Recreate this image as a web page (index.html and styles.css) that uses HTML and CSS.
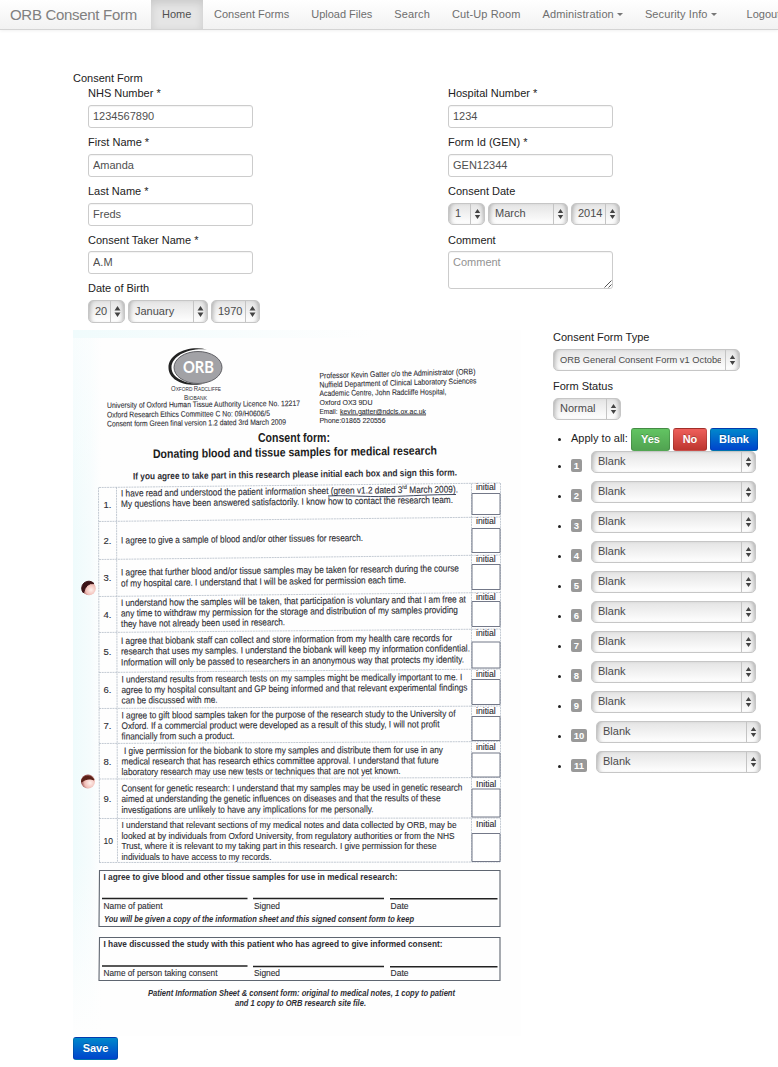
FILE: index.html
```html
<!DOCTYPE html>
<html lang="en">
<head>
<meta charset="utf-8">
<title>ORB Consent Form</title>
<link rel="stylesheet" href="styles.css">
</head>
<body>
<svg class="defs" width="0" height="0" aria-hidden="true">
  <symbol id="updown" viewBox="0 0 6 10"><path d="M3 0 5.700 4H.3zM3 10 .3 6h5.400z" fill="#444"/></symbol>
</svg>
<nav class="navbar">
  <a class="brand">ORB Consent Form</a>
  <a class="nav-link active">Home</a>
  <a class="nav-link">Consent Forms</a>
  <a class="nav-link">Upload Files</a>
  <a class="nav-link spaced">Search</a>
  <a class="nav-link spaced">Cut-Up Room</a>
  <a class="nav-link spaced">Administration<i class="caret"></i></a>
  <a class="nav-link spaced">Security Info<i class="caret"></i></a>
  <a class="nav-link logout">Logout</a>
</nav>

<main class="page">
  <div class="legend">Consent Form</div>
  <form class="fields">
    <div class="column">
      <div class="field"><label>NHS Number *</label><input type="text" value="1234567890"></div>
      <div class="field"><label>First Name *</label><input type="text" value="Amanda"></div>
      <div class="field"><label>Last Name *</label><input type="text" value="Freds"></div>
      <div class="field tight"><label>Consent Taker Name *</label><input type="text" value="A.M"></div>
      <div class="field"><label>Date of Birth</label>
        <div class="date tall">
          <span class="select day"><span>20</span><svg><use href="#updown"/></svg></span>
          <span class="select month"><span>January</span><svg><use href="#updown"/></svg></span>
          <span class="select year"><span>1970</span><svg><use href="#updown"/></svg></span>
        </div>
      </div>
    </div>
    <div class="column">
      <div class="field"><label>Hospital Number *</label><input type="text" value="1234"></div>
      <div class="field"><label>Form Id (GEN) *</label><input type="text" value="GEN12344"></div>
      <div class="field"><label>Consent Date</label>
        <div class="date">
          <span class="select day"><span>1</span><svg><use href="#updown"/></svg></span>
          <span class="select month"><span>March</span><svg><use href="#updown"/></svg></span>
          <span class="select year"><span>2014</span><svg><use href="#updown"/></svg></span>
        </div>
      </div>
      <div class="field tight"><label>Comment</label><div class="textarea"><span>Comment</span><svg class="grip" width="8" height="8" viewBox="0 0 8 8"><path d="M.5 7.500 7.500.5M4.500 7.500l3-3" stroke="#555" fill="none"/></svg></div></div>
    </div>
  </form>

  <section class="review">
    <svg class="scan" width="448" height="706" viewBox="73 330 448 706">
      <defs>
        <linearGradient id="edge"><stop offset="0" stop-color="#effbfc"/><stop offset=".6" stop-color="#f5fcfd"/><stop offset="1" stop-color="#fefefe"/></linearGradient>
        <linearGradient id="top"><stop offset="0" stop-color="#f0fbfc"/><stop offset="1" stop-color="#fefefe"/></linearGradient>
        <linearGradient id="fade" x2="0" y2="1"><stop offset="0" stop-color="#fefefe" stop-opacity=".6"/><stop offset=".3" stop-color="#fefefe" stop-opacity="0"/><stop offset=".75" stop-color="#fefefe" stop-opacity="0"/><stop offset="1" stop-color="#fefefe"/></linearGradient>
        <radialGradient id="hole" cx=".65" cy=".6" r=".65"><stop offset="0" stop-color="#fff0ec"/><stop offset=".6" stop-color="#f0bdb6"/><stop offset="1" stop-color="#8a4040"/></radialGradient>
      </defs>
      <rect x="73" y="330" width="448" height="706" fill="#fefefe"/>
      <rect x="73" y="330" width="28" height="706" fill="url(#edge)"/>
      <rect x="73" y="330" width="28" height="706" fill="url(#fade)"/>
      <rect x="73" y="330" width="300" height="8" fill="url(#top)"/>

      <path d="M207 349.500C188 345 168 354 168.500 368c.5 13 18 20 37 15.500-16 2-34-4-34-16 0-12 18-20 35.500-18z" fill="#222"/>
      <ellipse cx="198" cy="367.500" rx="24" ry="16" fill="#a2a2a6" stroke="#55555a" stroke-width=".9"/>
      <text class="orb" x="183" y="373" textLength="31" lengthAdjust="spacingAndGlyphs">ORB</text>
      <g class="tiny">
        <text x="171" y="391" textLength="50" lengthAdjust="spacingAndGlyphs"><tspan class="cap">O</tspan>XFORD <tspan class="cap">R</tspan>ADCLIFFE</text>
        <text x="184" y="399.500" textLength="23" lengthAdjust="spacingAndGlyphs"><tspan class="cap">B</tspan>IOBANK</text>
      </g>

      <g class="small">
        <text x="107" y="408" textLength="193" lengthAdjust="spacingAndGlyphs" transform="rotate(-.6 107 408)">University of Oxford Human Tissue Authority Licence No. 12217</text>
        <text x="107" y="417.500" textLength="163" lengthAdjust="spacingAndGlyphs" transform="rotate(-.5 107 417)">Oxford Research Ethics Committee C No: 09/H0606/5</text>
        <text x="107" y="426.500" textLength="179" lengthAdjust="spacingAndGlyphs" transform="rotate(-.6 107 426)">Consent form Green final version 1.2 dated 3rd March 2009</text>
        <text x="319.500" y="378.500" textLength="156" lengthAdjust="spacingAndGlyphs" transform="rotate(-1.600 320 378)">Professor Kevin Gatter c/o the Administrator (ORB)</text>
        <text x="319.500" y="387.500" textLength="157" lengthAdjust="spacingAndGlyphs" transform="rotate(-1.500 320 387)">Nuffield Department of Clinical Laboratory Sciences</text>
        <text x="319.500" y="396" textLength="127" lengthAdjust="spacingAndGlyphs" transform="rotate(-.7 320 396)">Academic Centre, John Radcliffe Hospital,</text>
        <text x="319.500" y="404.500" textLength="53" lengthAdjust="spacingAndGlyphs">Oxford  OX3 9DU</text>
        <text x="319.500" y="413.500" textLength="18" lengthAdjust="spacingAndGlyphs">Email:</text>
        <text x="340" y="413.500" textLength="86" lengthAdjust="spacingAndGlyphs" text-decoration="underline">kevin.gatter@ndcls.ox.ac.uk</text>
        <text x="319.500" y="422.500" textLength="66" lengthAdjust="spacingAndGlyphs">Phone:01865 220556</text>
      </g>
      <g class="heading">
        <text x="258" y="441.500" textLength="72" lengthAdjust="spacingAndGlyphs">Consent form:</text>
        <text x="153" y="458" textLength="284" lengthAdjust="spacingAndGlyphs" transform="rotate(-.7 153 458)">Donating blood and tissue samples for medical research</text>
      </g>
      <text class="bold" x="133" y="479.500" textLength="324" lengthAdjust="spacingAndGlyphs" transform="rotate(-.7 133 480)">If you agree to take part in this research please initial each box and sign this form.</text>

      <path class="rule" d="M99 487.500 500 483M99 521.500 500 517M99 559.500 500 555M99 596.500 500 592.500M99 632.500 500 629M99 672.500 500 669M99 708.500 500 706M99 743.500 500 741.500M99 779 500 777.500M99 818.500 500 818M99 862.500 500 862M98.500 487.500 99.500 862.500M116.500 487 117.500 862M471.500 483.500V862M500.500 483V862"/>
      <path class="box" d="M472 493.500h28v21h-28zM472 528.500h28v24h-28zM472 564.500h28v25h-28zM472 601.500h28v25h-28zM472 642h28v26h-28zM472 679.500h28v25h-28zM472 716.500h28v24h-28zM472 753h28v24h-28zM472 789h28v28h-28zM472 833.500h28v28h-28z"/>

      <g class="body">
        <text x="103.500" y="507.500">1.</text><text x="103.500" y="543.500">2.</text><text x="103.500" y="581">3.</text><text x="103.500" y="617.500">4.</text><text x="103.500" y="655">5.</text><text x="103.500" y="693">6.</text><text x="103.500" y="729">7.</text><text x="103.500" y="764.500">8.</text><text x="103.500" y="802">9.</text><text x="103.500" y="844" textLength="9.500" lengthAdjust="spacingAndGlyphs">10</text>

        <g transform="rotate(-.7 121 497)">
          <text x="121" y="496.500" textLength="337" lengthAdjust="spacingAndGlyphs">I have read and understood the patient information sheet (green v1.2 dated 3<tspan font-size="6" dy="-4">rd</tspan><tspan dy="4"> March 2009).</tspan></text>
          <text x="121" y="507" textLength="332" lengthAdjust="spacingAndGlyphs">My questions have been answered satisfactorily. I know how to contact the research team.</text>
        </g>
        <text x="121" y="543.500" textLength="242" lengthAdjust="spacingAndGlyphs" transform="rotate(-.6 121 543)">I agree to give a sample of blood and/or other tissues for research.</text>
        <g transform="rotate(-.7 121 580)">
          <text x="121" y="575.500" textLength="338" lengthAdjust="spacingAndGlyphs">I agree that further blood and/or tissue samples may be taken for research during the course</text>
          <text x="121" y="586.500" textLength="285" lengthAdjust="spacingAndGlyphs">of my hospital care.  I understand that I will be asked for permission each time.</text>
        </g>
        <g transform="rotate(-.6 121 616)">
          <text x="121" y="606" textLength="345" lengthAdjust="spacingAndGlyphs">I understand how the samples will be taken, that participation is voluntary and that I am free at</text>
          <text x="121" y="616.500" textLength="337" lengthAdjust="spacingAndGlyphs">any time to withdraw my permission for the storage and distribution of my samples providing</text>
          <text x="121" y="627" textLength="164" lengthAdjust="spacingAndGlyphs">they have not already been used in research.</text>
        </g>
        <g transform="rotate(-.5 121 654)">
          <text x="121" y="644" textLength="331" lengthAdjust="spacingAndGlyphs">I agree that biobank staff can collect and store information from my health care records for</text>
          <text x="121" y="654.500" textLength="349" lengthAdjust="spacingAndGlyphs">research that uses my samples.  I understand the biobank will keep my information confidential.</text>
          <text x="121" y="665.500" textLength="343" lengthAdjust="spacingAndGlyphs">Information will only be passed to researchers in an anonymous way that protects my identity.</text>
        </g>
        <g transform="rotate(-.4 121 693)">
          <text x="121.500" y="682.500" textLength="341" lengthAdjust="spacingAndGlyphs">I understand results from research tests on my samples might be medically important to me. I</text>
          <text x="121.500" y="693" textLength="346" lengthAdjust="spacingAndGlyphs">agree to my hospital consultant and GP being informed and that relevant experimental findings</text>
          <text x="121.500" y="703.500" textLength="96" lengthAdjust="spacingAndGlyphs">can be discussed with me.</text>
        </g>
        <g transform="rotate(-.3 121 728)">
          <text x="121.500" y="718.500" textLength="334" lengthAdjust="spacingAndGlyphs">I agree to gift blood samples taken for the purpose of the research study to the University of</text>
          <text x="121.500" y="729" textLength="318" lengthAdjust="spacingAndGlyphs">Oxford. If a commercial product were developed as a result of this study, I will not profit</text>
          <text x="121.500" y="739.500" textLength="113" lengthAdjust="spacingAndGlyphs">financially from such a product.</text>
        </g>
        <g transform="rotate(-.2 121 764)">
          <text x="124" y="754" textLength="319" lengthAdjust="spacingAndGlyphs">I give permission for the biobank to store my samples and distribute them for use in any</text>
          <text x="121.500" y="764.500" textLength="317" lengthAdjust="spacingAndGlyphs">medical research that has research ethics committee approval. I understand that future</text>
          <text x="121.500" y="775" textLength="279" lengthAdjust="spacingAndGlyphs">laboratory research may use new tests or techniques that are not yet known.</text>
        </g>
        <g transform="rotate(-.15 121 802)">
          <text x="121.500" y="791.500" textLength="341" lengthAdjust="spacingAndGlyphs">Consent for genetic research: I understand that my samples may be used in genetic research</text>
          <text x="121.500" y="802" textLength="319" lengthAdjust="spacingAndGlyphs">aimed at understanding the genetic influences on diseases and that the results of these</text>
          <text x="121.500" y="813" textLength="252" lengthAdjust="spacingAndGlyphs">investigations are unlikely to have any implications for me personally.</text>
        </g>
        <text x="121.500" y="828" textLength="335" lengthAdjust="spacingAndGlyphs">I understand that relevant sections of my medical notes and data collected by ORB, may be</text>
        <text x="121.500" y="838.700" textLength="333" lengthAdjust="spacingAndGlyphs">looked at by individuals from Oxford University, from regulatory authorities or from the NHS</text>
        <text x="121.500" y="849.400" textLength="315" lengthAdjust="spacingAndGlyphs">Trust, where it is relevant to my taking part in this research. I give permission for these</text>
        <text x="121.500" y="860.200" textLength="150" lengthAdjust="spacingAndGlyphs">individuals to have access to my records.</text>
      </g>
      <g class="initials">
        <text x="476" y="489.500">initial</text><text x="476" y="523.500">initial</text><text x="476" y="562">initial</text><text x="476" y="599.500">initial</text><text x="476" y="636">initial</text><text x="476" y="677">initial</text><text x="476" y="714">initial</text><text x="476" y="750">initial</text><text x="476" y="786.500">Initial</text><text x="476" y="827">Initial</text>
      </g>
      <path d="M328 496c20-1 34 1 60 .5s40-2 68-2" fill="none" stroke="#2b3550" stroke-width=".9"/>

      <path class="frame" d="M99.500 870.500h400.500v56h-401zM99.500 937.500h400.500v43h-401z"/>
      <path d="M102 898.500H247.500M253 898.500H384M390 898.800H497.500M102 966H247.500M253 966.500H384M390 966.800H497.500" stroke="#222" stroke-width="1.400"/>
      <g class="bold">
        <text x="103.500" y="880" textLength="294" lengthAdjust="spacingAndGlyphs">I agree to give blood and other tissue samples for use in medical research:</text>
        <text x="103.500" y="947" textLength="339" lengthAdjust="spacingAndGlyphs">I have discussed the study with this patient who has agreed to give informed consent:</text>
      </g>
      <g class="body">
        <text x="103.500" y="908.500" textLength="59" lengthAdjust="spacingAndGlyphs">Name of patient</text>
        <text x="254" y="908.500" textLength="26" lengthAdjust="spacingAndGlyphs">Signed</text>
        <text x="390.500" y="908.500" textLength="18" lengthAdjust="spacingAndGlyphs">Date</text>
        <text x="103.500" y="976" textLength="114" lengthAdjust="spacingAndGlyphs">Name of person taking consent</text>
        <text x="254" y="976" textLength="26" lengthAdjust="spacingAndGlyphs">Signed</text>
        <text x="390.500" y="976" textLength="18" lengthAdjust="spacingAndGlyphs">Date</text>
      </g>
      <g class="note">
        <text x="104" y="922" textLength="310" lengthAdjust="spacingAndGlyphs">You will be given a copy of the information sheet and this signed consent form to keep</text>
        <text x="148" y="996" textLength="307" lengthAdjust="spacingAndGlyphs">Patient Information Sheet &amp; consent form: original to medical notes, 1 copy to patient</text>
        <text x="235" y="1006" textLength="131" lengthAdjust="spacingAndGlyphs">and 1 copy to ORB research site file.</text>
      </g>
      <circle cx="89" cy="588.500" r="6.800" fill="url(#hole)"/>
      <path d="M83.500 593a7 7 0 0 1 10.500-9.500q-8-1-10.500 9.500z" fill="#3a1216" stroke="#3a1216"/>
      <circle cx="88" cy="781.500" r="7" fill="url(#hole)"/>
      <path d="M81.500 782a6.500 6.500 0 0 1 12.500-2q-6-3-12.500 2z" fill="#5b2018" stroke="#5b2018"/>
    </svg>

    <aside class="panel">
      <label>Consent Form Type</label>
      <span class="select type"><span>ORB General Consent Form v1 October</span><svg><use href="#updown"/></svg></span>
      <label>Form Status</label>
      <span class="select status"><span>Normal</span><svg><use href="#updown"/></svg></span>
      <ul class="answers">
        <li class="apply"><span class="apply-label">Apply to all:</span><a class="btn yes">Yes</a><a class="btn no">No</a><a class="btn blue">Blank</a></li>
        <li><b class="badge">1</b><span class="select"><span>Blank</span><svg><use href="#updown"/></svg></span></li>
        <li><b class="badge">2</b><span class="select"><span>Blank</span><svg><use href="#updown"/></svg></span></li>
        <li><b class="badge">3</b><span class="select"><span>Blank</span><svg><use href="#updown"/></svg></span></li>
        <li><b class="badge">4</b><span class="select"><span>Blank</span><svg><use href="#updown"/></svg></span></li>
        <li><b class="badge">5</b><span class="select"><span>Blank</span><svg><use href="#updown"/></svg></span></li>
        <li><b class="badge">6</b><span class="select"><span>Blank</span><svg><use href="#updown"/></svg></span></li>
        <li><b class="badge">7</b><span class="select"><span>Blank</span><svg><use href="#updown"/></svg></span></li>
        <li><b class="badge">8</b><span class="select"><span>Blank</span><svg><use href="#updown"/></svg></span></li>
        <li><b class="badge">9</b><span class="select"><span>Blank</span><svg><use href="#updown"/></svg></span></li>
        <li><b class="badge wide">10</b><span class="select"><span>Blank</span><svg><use href="#updown"/></svg></span></li>
        <li><b class="badge wide">11</b><span class="select"><span>Blank</span><svg><use href="#updown"/></svg></span></li>
      </ul>
    </aside>
  </section>
  <a class="btn blue save">Save</a>
</main>
</body>
</html>
```

FILE: styles.css
```css
* { box-sizing: border-box; }
html { overflow: hidden; }
body {
  margin: 0;
  height: 1067px;
  overflow: hidden;
  background: #fff;
  color: #222;
  font: 11px/15px "Liberation Sans", Arial, sans-serif;
}
.defs { display: block; }

/* Navigation */
.navbar {
  display: flex;
  height: 30px;
  overflow: hidden;
  background: linear-gradient(#fff, #f2f2f2);
  border-bottom: 1px solid #d4d4d4;
  box-shadow: 0 1px 3px rgba(0, 0, 0, .06);
  color: #6e6e6e;
  white-space: nowrap;
}
.brand {
  flex: none;
  width: 151px;
  padding-left: 10px;
  font-size: 15px;
  line-height: 29px;
  letter-spacing: -.3px;
  color: #808080;
}
.nav-link { flex: none; padding: 0 11px; line-height: 29px; }
.nav-link.active {
  width: 52px;
  background: #e5e5e5;
  box-shadow: inset 0 3px 8px rgba(0, 0, 0, .125);
  color: #505050;
}
.spaced { letter-spacing: .12px; }
.caret {
  display: inline-block;
  margin-left: 3px;
  vertical-align: 2px;
  border: 3px solid transparent;
  border-top-color: #777;
  border-bottom: 0;
}
.logout { padding-left: 19px; }

/* Form */
.page { padding: 41px 0 0 73px; }
.legend { height: 15px; }
.fields { display: flex; height: 244px; padding-left: 15px; }
.column { flex: none; width: 360px; }
.column:last-child { width: 180px; }
.field { height: 49px; }
label { display: block; height: 15px; margin-bottom: 4px; }
.tight { height: 48px; }
.tight label { margin-bottom: 3px; }
input, .textarea {
  display: block;
  width: 165px;
  height: 23px;
  margin: 0;
  padding: 0 4px 2px;
  border: 1px solid #ccc;
  border-radius: 3px;
  background: #fff;
  box-shadow: inset 0 1px 1px rgba(0, 0, 0, .05);
  color: #505050;
  font: 11px/15px "Liberation Sans", Arial, sans-serif;
}
.textarea { position: relative; height: 38px; padding-top: 3px; color: #929292; }
.grip { position: absolute; right: 0; bottom: 0; }
.date { display: flex; gap: 3px; }
.select {
  display: flex;
  width: 165px;
  height: 22px;
  border: 1px solid #c6c6c6;
  border-radius: 5px;
  background: linear-gradient(#e4e4e4, #fff);
  box-shadow: inset 4px 0 4px -3px rgba(0, 0, 0, .28), inset -4px 0 4px -3px rgba(0, 0, 0, .28);
  color: #4c4c4c;
  line-height: 19px;
}
.select span { flex: 1; min-width: 0; padding-left: 6px; overflow: hidden; white-space: nowrap; }
.select svg {
  flex: none;
  width: 14px;
  height: 20px;
  padding: 5px 3px;
  border-left: 1px solid #c4c4c4;
}
.tall .select { height: 23px; line-height: 21px; }
.tall .select svg { height: 21px; }
.select.day { width: 37px; }
.select.month { width: 80px; }
.select.year { width: 49px; }

/* Scan and answers */
.review { display: flex; gap: 32px; height: 707px; }
.scan { flex: none; display: block; font-family: "Liberation Sans", Arial, sans-serif; fill: #2d2d33; }
.orb { font: bold 17px Lato, sans-serif; fill: #fff; }
.tiny { font-size: 6px; }
.tiny .cap { font-size: 7.500px; }
.small { font-size: 8px; stroke: #2d2d33; stroke-width: .1; }
.heading { font-size: 12.200px; font-weight: bold; fill: #202020; }
.bold { font-size: 9.600px; font-weight: bold; }
.body { font-size: 9.500px; stroke: #2d2d33; stroke-width: .12; }
.initials { font-size: 8.700px; stroke: #2d2d33; stroke-width: .12; }
.note { font-size: 8.500px; font-weight: bold; font-style: italic; }
.rule { fill: none; stroke: #b4bdc8; stroke-width: .8; stroke-dasharray: 2 .7; }
.box { fill: #fff; stroke: #737888; stroke-width: 1; }
.frame { fill: none; stroke: #5e6570; stroke-width: 1.100; }
.panel { width: 210px; }
.select.type { width: 187px; font-size: 9.300px; line-height: 21px; margin-bottom: 8px; }
.select.type span { margin-right: 4px; }
.select.status { width: 68px; }
.answers { margin: 8px 0 0; padding: 0; list-style: none; }
.answers li { display: flex; height: 30px; }
.answers li::before {
  content: "";
  flex: none;
  width: 3px;
  height: 3px;
  margin: 14px 9px 0 5px;
  border-radius: 50%;
  background: #222;
}
.answers li::before { margin-right: 10px; }
.answers .apply { height: 23px; }
.answers .apply::before { margin-top: 10px; }
.apply-label { width: 60px; padding-top: 3px; white-space: nowrap; }
.badge {
  width: 11px;
  height: 13px;
  margin: 8px 9px 0 0;
  border-radius: 2px;
  background: #999;
  color: #fff;
  font-size: 9.500px;
  line-height: 13px;
  text-align: center;
}
.badge.wide { width: 16px; }
.btn {
  height: 23px;
  border: 1px solid rgba(0, 0, 0, .15);
  border-radius: 3px;
  color: #fff;
  font-weight: bold;
  line-height: 21px;
  text-align: center;
  text-shadow: 0 -1px 0 rgba(0, 0, 0, .25);
}
.yes { width: 39px; margin-right: 3px; background: linear-gradient(#62c462, #51a351); }
.no { width: 34px; margin-right: 3px; background: linear-gradient(#ee5f5b, #bd362f); }
.blue { width: 48px; background: linear-gradient(#0088cc, #0044cc); }
.save { display: block; width: 45px; }
```
